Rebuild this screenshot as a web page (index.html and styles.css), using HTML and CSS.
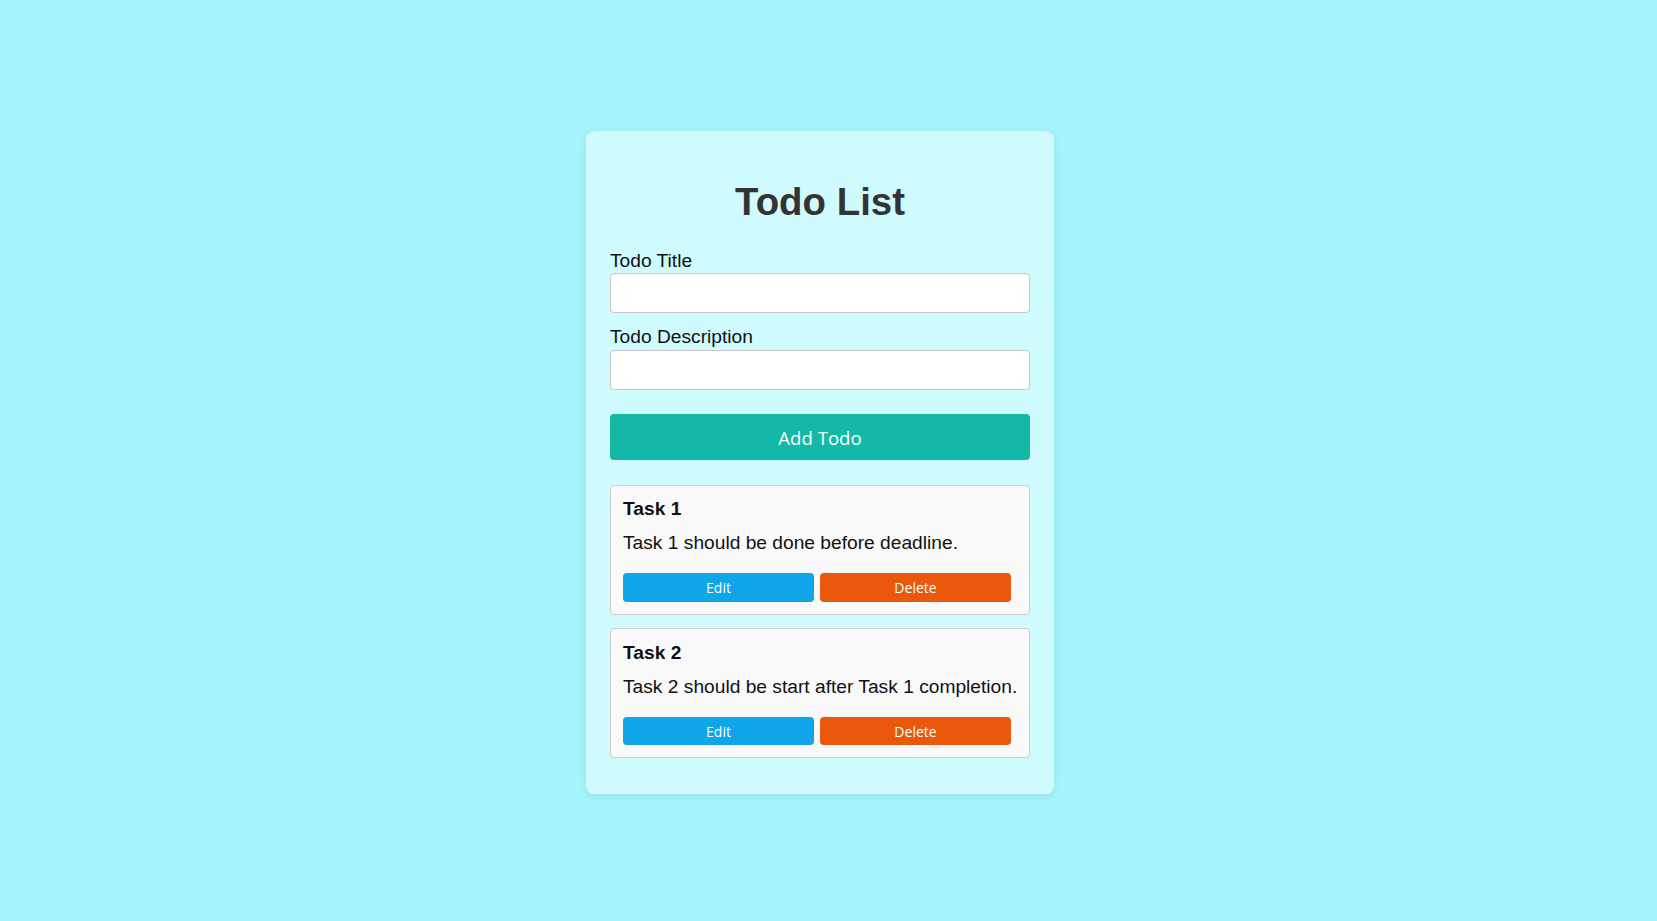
FILE: index.html
```html
<!DOCTYPE html>
<html lang="en">
<head>
<meta charset="utf-8">
<title>Todo List</title>
<link rel="stylesheet" href="styles.css">
</head>
<body>
<div class="page">
  <div class="card">
    <h1 class="title">Todo List</h1>
    <label class="label" for="t">Todo Title</label>
    <input class="field" id="t" type="text">
    <label class="label label-second" for="d">Todo Description</label>
    <input class="field" id="d" type="text">
    <button class="add-btn">Add Todo</button>
    <div class="todos">
      <div class="todo">
        <h3 class="todo-title">Task 1</h3>
        <p class="todo-desc">Task 1 should be done before deadline.</p>
        <div class="actions">
          <button class="btn btn-edit">Edit</button>
          <button class="btn btn-delete">Delete</button>
        </div>
      </div>
      <div class="todo">
        <h3 class="todo-title">Task 2</h3>
        <p class="todo-desc">Task 2 should be start after Task 1 completion.</p>
        <div class="actions">
          <button class="btn btn-edit">Edit</button>
          <button class="btn btn-delete">Delete</button>
        </div>
      </div>
    </div>
  </div>
</div>
</body>
</html>
```
FILE: styles.css
```css
* { box-sizing: border-box; }
html, body { margin: 0; padding: 0; }
body {
  background: #a5f3fc;
  font-family: "Liberation Sans", Arial, sans-serif;
  color: #111;
}
.page {
  min-height: 100vh;
  display: flex;
  justify-content: center;
  align-items: center;
  padding: 4px 17px 0 0;
}
.card {
  width: 468px;
  background: #cffafe;
  border-radius: 8px;
  padding: 24px 24px 24px;
  box-shadow: 0 2px 8px rgba(0, 0, 0, 0.08);
  display: flex;
  flex-direction: column;
}
.title {
  font-size: 38.4px;
  font-weight: bold;
  color: #333;
  text-align: center;
  margin: 25.7px 0 25.7px;
  line-height: normal;
}
.label {
  font-size: 19.2px;
  color: #111;
  display: block;
  margin-bottom: 1.5px;
}
.label-second { margin-top: 13px; }
.field {
  width: 100%;
  height: 40px;
  border: 1px solid #c8c8c8;
  border-radius: 4px;
  background: #fff;
  padding: 0 10px;
  font-size: 16px;
  outline: none;
}
.add-btn {
  margin-top: 24.5px;
  height: 46px;
  width: 100%;
  border: none;
  border-radius: 4px;
  background: #14b8a6;
  color: #f4fffd;
  font-family: "Open Sans", "Noto Sans", sans-serif;
  font-size: 18.6px;
  cursor: pointer;
}
.todos {
  margin-top: 24.5px;
  display: flex;
  flex-direction: column;
  gap: 13.4px;
  margin-bottom: 12px;
}
.todo {
  background: #f9f9f9;
  border: 1px solid #cfcfcf;
  border-radius: 4px;
  padding: 12px 12px 12px;
}
.todo-title {
  margin: 0.5px 0 0;
  font-size: 19.2px;
  font-weight: bold;
  color: #111;
  line-height: normal;
}
.todo-desc {
  margin: 12px 0 19px;
  font-size: 19.2px;
  color: #111;
  line-height: normal;
  white-space: nowrap;
}
.actions {
  display: grid;
  grid-template-columns: 191px 191px;
  gap: 6px;
}
.btn {
  height: 28.5px;
  border: none;
  border-radius: 4px;
  color: #fff;
  font-family: "Open Sans", "Noto Sans", sans-serif;
  font-size: 14px;
  cursor: pointer;
  padding: 0;
}
.btn-edit { background: #0ea5e9; }
.btn-delete { background: #ea580c; }
```
